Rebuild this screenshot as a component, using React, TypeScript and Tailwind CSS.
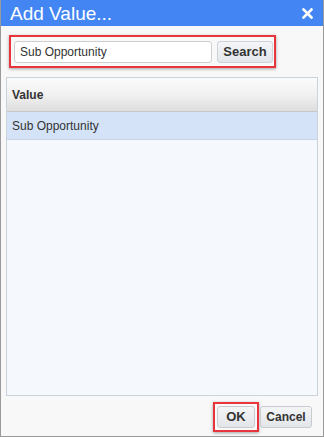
import React from "react";

export default function App() {
  return (
    <div
      className="w-[324px] h-[437px] flex flex-col bg-[#f8f8f8] border border-[#9a9a9a] border-t-0 overflow-hidden"
      style={{ fontFamily: '"Liberation Sans", Arial, sans-serif' }}
    >
      <div className="h-[26px] shrink-0 bg-[#4386f3] flex items-center justify-between pl-[9px] pr-[8px]">
        <span className="text-white text-[19px] leading-none">Add Value...</span>
        <svg width="11" height="11" viewBox="0 0 11 11" className="mr-[2px]">
          <path d="M1.5 1.5 L9.5 9.5 M9.5 1.5 L1.5 9.5" stroke="white" strokeWidth="2.6" strokeLinecap="square" />
        </svg>
      </div>
      <div className="pt-[9px] pl-[8px]">
        <div className="w-[267px] h-[33px] border-2 border-[#e8343c] shadow-[0_1px_3px_rgba(0,0,0,0.35)] flex items-center pl-[3px] gap-[5px]">
          <div className="w-[198px] h-[22px] bg-white border border-[#cfcfcf] rounded-[3px] flex items-center pl-[5px] text-[12px] text-[#333]">
            Sub Opportunity
          </div>
          <div className="w-[56px] h-[22px] rounded-[3px] border border-[#cdd2d8] bg-gradient-to-b from-[#f4f6f8] to-[#e2e6ea] flex items-center justify-center text-[13px] font-bold text-[#333]">
            Search
          </div>
        </div>
      </div>
      <div className="mx-[5px] mt-[9px] flex-1 border border-[#c9d3dc] bg-[#f5f8fc] flex flex-col">
        <div className="h-[34px] border-b border-[#c8c8c8] bg-gradient-to-b from-[#fbfbfb] via-[#f1f1f1] to-[#dedede] flex items-center pl-[5px] text-[12px] font-bold text-[#333]">
          Value
        </div>
        <div className="h-[28px] bg-[#d5e3f9] border-b border-[#c6d3e3] flex items-center pl-[5px] text-[12px] text-[#333]">
          Sub Opportunity
        </div>
      </div>
      <div className="h-[40px] shrink-0 flex items-center justify-end pr-[11px] pt-[2px]">
        <div className="w-[46px] h-[30px] border-2 border-[#e8343c] shadow-[0_1px_3px_rgba(0,0,0,0.35)] flex items-center justify-center mr-[1px]">
          <div className="w-[38px] h-[22px] rounded-[3px] border border-[#c8ccd1] bg-gradient-to-b from-[#f4f5f7] to-[#e3e6e9] flex items-center justify-center text-[13px] font-bold text-[#333]">
            OK
          </div>
        </div>
        <div className="w-[52px] h-[22px] rounded-[3px] border border-[#c8ccd1] bg-gradient-to-b from-[#f4f5f7] to-[#e3e6e9] flex items-center justify-center text-[12px] font-bold text-[#333]">
          Cancel
        </div>
      </div>
    </div>
  );
}
